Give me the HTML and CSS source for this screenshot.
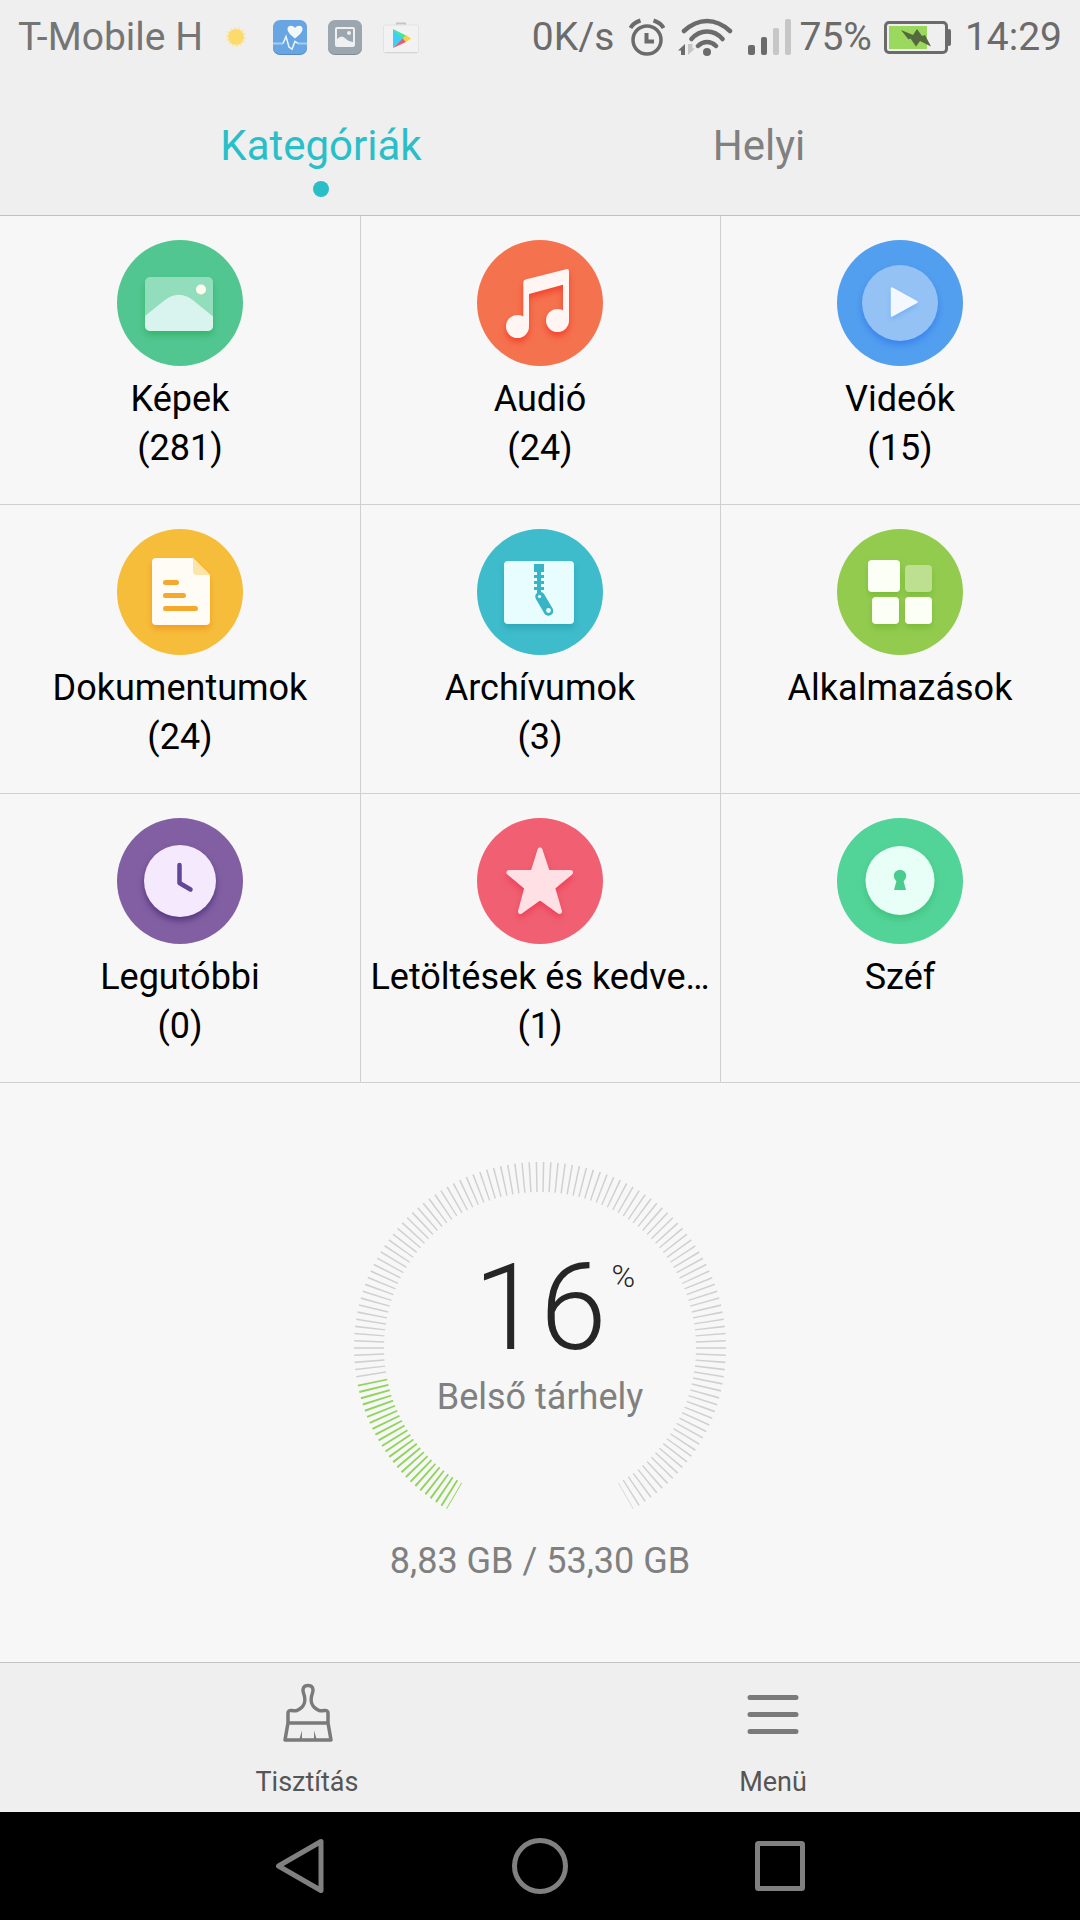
FILE: index.html
```html
<!DOCTYPE html>
<html lang="hu">
<head>
<meta charset="utf-8">
<meta name="viewport" content="width=device-width, initial-scale=1">
<title>Fájlok</title>
<link rel="stylesheet" href="styles.css">
</head>
<body>
<div class="status">
  <div class="status-group status-left">
    <span>T-Mobile H</span>
    <svg width="28" height="36" viewBox="0 0 28 36" aria-hidden="true"><circle cx="12" cy="18" r="9" fill="none" stroke="#fbe7a8" stroke-width="2" stroke-dasharray="2 2"/><circle cx="12" cy="18" r="8" fill="#fcdb6d"/></svg>
    <svg width="34" height="36" viewBox="0 0 34 36" aria-hidden="true"><rect y="2" width="34" height="34" rx="7" fill="#5489c4"/><rect y="1" width="34" height="34" rx="7" fill="#68a6e3"/><path d="M0 24.500H10M25 24.500H34" stroke="#a8cbee" stroke-width="2"/><path d="M10 24.500L13 17.500L16 28L19 30L22 22.500L25 24.500" fill="none" stroke="#eef6fd" stroke-width="1.500"/><path d="M22 19.500C18 16 14.500 13.500 14.500 10C14.500 6.500 19.500 5.500 22 9C24.500 5.500 29.500 6.500 29.500 10C29.500 13.500 26 16 22 19.500z" fill="#f4f8fb"/></svg>
    <svg width="34" height="36" viewBox="0 0 34 36" aria-hidden="true"><rect y="2" width="34" height="34" rx="7" fill="#818b93"/><rect y="1" width="34" height="34" rx="7" fill="#9ba6ae"/><rect x="8" y="9" width="18" height="18" rx="1" fill="none" stroke="#eef0f1" stroke-width="2"/><path d="M9 20Q14 15 18 20Q21 23 25 23V27H9z" fill="#eef0f1"/><circle cx="21" cy="14" r="2" fill="#eef0f1"/></svg>
    <svg width="36" height="36" viewBox="0 0 36 36" aria-hidden="true"><path d="M14 6V4.500H22V6" fill="none" stroke="#c4c4c4" stroke-width="2"/><rect x=".5" y="6" width="35" height="28" rx="2" fill="#f2f2f2" stroke="#e2e2e2"/><path d="M2 33.500H34" stroke="#d4d4d4"/><path d="M10 10V29L20.500 19.500z" fill="#3bd0f8"/><path d="M10 10L23 16.500L20 19.800z" fill="#42e88c"/><path d="M10 29L23 23L20 19.200z" fill="#ed5b6d"/><path d="M23 16L28 19.500L23 23L20 19.500z" fill="#fccf3b"/></svg>
  </div>
  <div class="status-group status-right">
    <span>0K/s</span>
    <svg width="39" height="40" viewBox="-3 0 39 40" fill="none" stroke="#6b6b6b" aria-hidden="true"><circle cx="18" cy="23" r="14" stroke-width="3.500"/><path d="M17.500 16V24.500H25" stroke-width="4"/><path d="M1.500 11Q4 6 11.500 3.500M34.500 11Q32 6 24.500 3.500" stroke-width="4"/></svg>
    <svg width="56" height="40" viewBox="0 0 56 40" fill="none" stroke="#6b6b6b" stroke-width="4.500" stroke-linecap="round" aria-hidden="true"><path d="M7 14Q18 4 30 4Q42 4 53 14M14.500 22Q21 14.500 30 14.500Q39 14.500 45.500 22M21 29Q25 25 30 25Q35 25 39 29"/><circle cx="30" cy="35" r="4" fill="#6b6b6b" stroke="none"/><path d="M8 38V27L1 33.500H4V38z" fill="#6b6b6b" stroke="none"/><path d="M11 27V38L18 31.500H15.500V27z" fill="#c6c6c6" stroke="none"/></svg>
    <div class="status-pair">
      <svg width="46" height="40" viewBox="-3 0 46 40" aria-hidden="true"><rect y="28" width="7" height="10" rx="2" fill="#6b6b6b"/><rect x="13" y="20" width="6" height="18" rx="2" fill="#6b6b6b"/><rect x="25" y="11" width="6" height="27" rx="2" fill="#c6c6c6"/><rect x="37" y="2" width="6" height="36" rx="2" fill="#c6c6c6"/></svg>
      <span>75%</span>
    </div>
    <svg width="69" height="36" viewBox="0 0 69 36" aria-hidden="true"><rect x="1.500" y="3.500" width="61" height="30" rx="3.500" fill="none" stroke="#6b6b6b" stroke-width="3"/><rect x="63" y="10" width="4" height="17" rx="2" fill="#6b6b6b"/><rect x="5" y="7" width="38" height="23" fill="#9bd85e"/><path d="M17 11L29 16L33 10L38 17L41 16L47 27.500L36 22L32 27.500L26.500 19.500L24.500 20.500z" fill="#55683e"/></svg>
    <span>14:29</span>
  </div>
</div>

<nav class="tabs" role="tablist">
  <button class="tab tab-active" role="tab" aria-selected="true">Kategóriák</button>
  <button class="tab" role="tab" aria-selected="false">Helyi</button>
</nav>

<main class="content">
  <div class="grid">
    <button class="cell">
      <svg class="icon" viewBox="0 0 126 126" aria-hidden="true"><circle cx="63" cy="63" r="63" fill="#52c691"/><g class="shadow-green"><rect x="28" y="37" width="68" height="54" rx="5" fill="#92debc"/><path d="M28 76L46 61.500Q61.500 48.500 77 61L96 76.500V86a5 5 0 0 1-5 5H33a5 5 0 0 1-5-5z" fill="#d9f3ee"/></g><circle cx="84" cy="49.500" r="5" fill="#fffbf0"/></svg>
      <span>Képek</span><span>(281)</span>
    </button>
    <button class="cell">
      <svg class="icon" viewBox="0 0 126 126" aria-hidden="true"><circle cx="63" cy="63" r="63" fill="#f5724e"/><g class="shadow-red" fill="#fff5f2"><path d="M46.300 87V42.500Q46.300 40.200 48.500 39.500L89 29.200Q92 28.500 92 31V81H86V44.700L52 54V87z"/><circle cx="40.500" cy="86.500" r="11.500"/><circle cx="80.500" cy="80.500" r="11.500"/></g></svg>
      <span>Audió</span><span>(24)</span>
    </button>
    <button class="cell">
      <svg class="icon" viewBox="0 0 126 126" aria-hidden="true"><circle cx="63" cy="63" r="63" fill="#529eef"/><circle class="shadow-blue" cx="63" cy="63" r="38" fill="#94c2f5"/><path class="shadow-sky" d="M55 48.500V75.500L79.500 62z" fill="#f3f8fe" stroke="#f3f8fe" stroke-width="2.500" stroke-linejoin="round"/></svg>
      <span>Videók</span><span>(15)</span>
    </button>
    <button class="cell">
      <svg class="icon" viewBox="0 0 126 126" aria-hidden="true"><circle cx="63" cy="63" r="63" fill="#f6bd3b"/><g class="shadow-orange"><path d="M39 29H76L93 46V92a4 4 0 0 1-4 4H39a4 4 0 0 1-4-4V33a4 4 0 0 1 4-4z" fill="#fffcf5"/></g><path d="M76 29L93 46H80a4 4 0 0 1-4-4z" fill="#fde4ab"/><path d="M48.500 53.500H59.500M48.500 66.500H66.500M48.500 79.500H78.500" stroke="#f6a82c" stroke-width="5" stroke-linecap="round"/></svg>
      <span>Dokumentumok</span><span>(24)</span>
    </button>
    <button class="cell">
      <svg class="icon" viewBox="0 0 126 126" aria-hidden="true"><circle cx="63" cy="63" r="63" fill="#3ebccb"/><rect class="shadow-teal" x="27" y="32" width="70" height="63" rx="4" fill="#e8fdff"/><g fill="#38b4c5"><path d="M57 35H67V43H64V46H67V49H64V52H67V55H64V58H67V61H64V66H60V61H57V58H60V55H57V52H60V49H57V46H60V43H57z"/><path d="M63 67.500L71.500 82" stroke="#38b4c5" stroke-width="9.500" stroke-linecap="round"/></g><circle cx="62.500" cy="67.500" r="1.600" fill="#e8fdff"/><circle cx="71.500" cy="81.500" r="2.400" fill="#e8fdff"/></svg>
      <span>Archívumok</span><span>(3)</span>
    </button>
    <button class="cell">
      <svg class="icon" viewBox="0 0 126 126" aria-hidden="true"><circle cx="63" cy="63" r="63" fill="#93cb4f"/><g class="shadow-lime" fill="#fbfff6"><rect x="31" y="31" width="32" height="32" rx="4"/><rect x="68" y="36" width="27" height="27" rx="4" fill="#bde090"/><rect x="35" y="68" width="27" height="27" rx="4"/><rect x="68" y="68" width="27" height="27" rx="4"/></g></svg>
      <span>Alkalmazások</span>
    </button>
    <button class="cell">
      <svg class="icon" viewBox="0 0 126 126" aria-hidden="true"><circle cx="63" cy="63" r="63" fill="#825fa2"/><circle class="shadow-purple" cx="63" cy="63" r="36" fill="#f5e9fe"/><path d="M62.500 47V65L73.500 71.500" fill="none" stroke="#624796" stroke-width="4.500" stroke-linecap="round" stroke-linejoin="round"/></svg>
      <span>Legutóbbi</span><span>(0)</span>
    </button>
    <button class="cell">
      <svg class="icon" viewBox="0 0 126 126" aria-hidden="true"><circle cx="63" cy="63" r="63" fill="#f06072"/><path class="shadow-rose" d="M63 32L70.500 54.500H93.500L75.500 69.500L82.500 93.500L63 79.500L43.500 93.500L50 69.500L32 54.500H56z" fill="#ffe1e5" stroke="#ffe1e5" stroke-width="5" stroke-linejoin="round"/></svg>
      <span>Letöltések és kedve…</span><span>(1)</span>
    </button>
    <button class="cell">
      <svg class="icon" viewBox="0 0 126 126" aria-hidden="true"><circle cx="63" cy="63" r="63" fill="#52d397"/><circle class="shadow-mint" cx="63" cy="62.500" r="34.500" fill="#e7fff7"/><circle cx="63" cy="58" r="6.200" fill="#4ccb8e"/><path d="M60 61H66L69 72H57z" fill="#4ccb8e"/></svg>
      <span>Széf</span>
    </button>
  </div>

  <section class="storage">
    <div class="gauge">
      <svg class="ring" viewBox="-187 -187 374 350" fill="none" stroke-width="30" aria-hidden="true">
        <path d="M85.500 148.090A171 171 0 1 0 -168.820 27.190" pathLength="249.140" stroke="#d0d0d0" stroke-dasharray="0.500 1.722" stroke-dashoffset="0.250"/>
        <path d="M-85.500 148.090A171 171 0 0 1 -167.630 33.800" pathLength="48.600" stroke="#90d45c" stroke-dasharray="0.620 1.394" stroke-dashoffset="0.310"/>
      </svg>
      <div class="reading">
        <div class="percent"><span class="number">16</span><span class="sign">%</span></div>
        <div class="caption">Belső tárhely</div>
      </div>
    </div>
    <div class="caption">8,83 GB / 53,30 GB</div>
  </section>
</main>

<footer class="toolbar">
  <button class="tool">
    <svg width="60" height="60" viewBox="-1 0 60 60" fill="none" stroke="#7a7a7a" stroke-width="3.500" stroke-linejoin="round" aria-hidden="true"><path d="M30 2.500C25.500 2.500 24 6 25.500 10C28 17 28 23 19 27.500Q17 28 14 27.500Q10 27 10 30V40L7 57H53L50 40V30Q50 27 46 27.500Q43 28 41 27.500C32 23 32 17 34.500 10C36 6 34.500 2.500 30 2.500zM10 40H50"/><path d="M21.500 56L24 47.500V56zM38.500 56L36 47.500V56z" fill="#7a7a7a" stroke="none"/></svg>
    <span>Tisztítás</span>
  </button>
  <button class="tool">
    <svg width="60" height="60" viewBox="0 0 60 60" stroke="#7a7a7a" stroke-width="5" stroke-linecap="round" aria-hidden="true"><path d="M7 14.500H53M7 31.500H53M7 48.500H53"/></svg>
    <span>Menü</span>
  </button>
</footer>

<nav class="system">
  <button class="key" aria-label="Vissza"><svg width="60" height="60" viewBox="0 0 60 60" fill="none" stroke="#808080" stroke-width="5" stroke-linejoin="round" aria-hidden="true"><path d="M51 5.500V54.500L8.500 30z"/></svg></button>
  <button class="key" aria-label="Kezdőlap"><svg width="60" height="60" viewBox="0 0 60 60" fill="none" stroke="#808080" stroke-width="5" aria-hidden="true"><circle cx="30" cy="30" r="25.500"/></svg></button>
  <button class="key" aria-label="Legutóbbiak"><svg width="60" height="60" viewBox="0 0 60 60" fill="none" stroke="#808080" stroke-width="5" aria-hidden="true"><rect x="7.500" y="7.500" width="45" height="45" rx="1"/></svg></button>
</nav>
</body>
</html>
```
FILE: styles.css
```css
* { box-sizing: border-box; }

body {
  margin: 0;
  min-height: 100vh;
  display: flex;
  flex-direction: column;
  background: #f7f7f7;
  font-family: Roboto, "Liberation Sans", sans-serif;
  color: #000;
}

button {
  margin: 0;
  padding: 0;
  border: 0;
  background: none;
  font: inherit;
  color: inherit;
  cursor: pointer;
}

svg { display: block; flex: none; }

/* status bar */
.status {
  display: flex;
  justify-content: space-between;
  height: 73px;
  padding: 0 18px;
  background: #efefef;
  color: #757575;
  font-size: 39px;
  line-height: 46px;
}
.status-group,
.status-pair { display: flex; align-items: center; }
.status-left { gap: 21px; }
.status-right { gap: 12px; color: #6b6b6b; }
.status-pair { gap: 8px; }

/* tabs */
.tabs {
  display: flex;
  height: 143px;
  padding: 0 102px;
  background: #efefef;
  border-bottom: 1px solid #c2c2c2;
  color: #808080;
}
.tab {
  flex: 1;
  display: flex;
  flex-direction: column;
  align-items: center;
  gap: 11px;
  padding-top: 49px;
  font-size: 42px;
  line-height: 48px;
}
.tab-active { color: #2abfc8; }
.tab-active::after {
  content: "";
  width: 16px;
  height: 16px;
  border-radius: 50%;
  background: #2abfc8;
}

/* categories */
.content { flex: 1; display: flex; flex-direction: column; }
.grid { display: grid; grid-template-columns: repeat(3, 1fr); }
.cell {
  display: flex;
  flex-direction: column;
  align-items: center;
  padding: 24px 0 31px;
  border-bottom: 1px solid #d0d0d0;
  font-size: 36px;
  line-height: 49px;
  white-space: nowrap;
}
.cell:not(:nth-child(3n + 1)) { box-shadow: inset 1px 0 #d0d0d0; }
.icon { width: 126px; height: 126px; margin-bottom: 9px; }

.shadow-green { filter: drop-shadow(0 4px 3px #36b46c); }
.shadow-red { filter: drop-shadow(0 4px 3px #f2432e); }
.shadow-blue { filter: drop-shadow(0 4px 3px #3a83ec); }
.shadow-sky { filter: drop-shadow(0 3px 2px #79b0f2); }
.shadow-orange { filter: drop-shadow(0 4px 3px #f39c23); }
.shadow-teal { filter: drop-shadow(0 4px 3px #2fa6b9); }
.shadow-lime { filter: drop-shadow(0 4px 3px #7cbc3a); }
.shadow-purple { filter: drop-shadow(0 4px 3px #563880); }
.shadow-rose { filter: drop-shadow(0 4px 3px #ee4058); }
.shadow-mint { filter: drop-shadow(0 4px 3px #42c280); }

/* storage gauge */
.storage {
  flex: 1;
  display: flex;
  flex-direction: column;
  align-items: center;
  gap: 26px;
  padding: 78px 0 60px;
}
.gauge { display: grid; }
.ring, .reading { grid-area: 1 / 1; }
.ring { width: 374px; height: 350px; }
.reading { padding-top: 82px; text-align: center; }
.percent {
  display: grid;
  grid-template-columns: 1fr auto 1fr;
  color: #262626;
  font-weight: 300;
}
.number {
  grid-column: 2;
  font-size: 120px;
  line-height: 130px;
}
.sign {
  padding: 13px 0 0 5px;
  text-align: left;
  font-size: 32px;
  line-height: 40px;
}
.caption {
  color: #808080;
  font-size: 36px;
  line-height: 48px;
}

/* bottom toolbar */
.toolbar {
  display: flex;
  height: 150px;
  padding: 20px 74px 0;
  background: #efefef;
  border-top: 1px solid #c2c2c2;
  color: #555;
}
.tool {
  flex: 1;
  display: flex;
  flex-direction: column;
  align-items: center;
  gap: 23px;
  font-size: 27px;
  line-height: 32px;
}

/* system navigation */
.system {
  display: grid;
  grid-template-columns: repeat(3, 1fr);
  height: 108px;
  padding: 0 calc(100% / 6);
  background: #000;
}
.key { display: flex; align-items: center; justify-content: center; }
```
